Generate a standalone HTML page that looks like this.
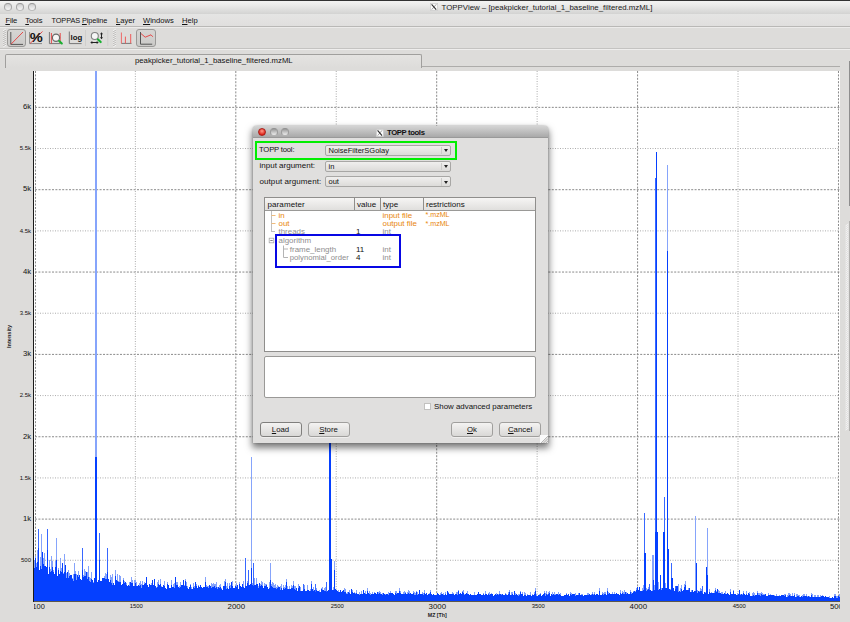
<!DOCTYPE html>
<html><head><meta charset="utf-8"><title>TOPPView</title>
<style>
html,body{margin:0;padding:0;}
body{width:850px;height:622px;overflow:hidden;position:relative;background:#dddcda;font-family:"Liberation Sans",sans-serif;color:#111;font-size:8px;}
div,span{box-sizing:border-box;}
.abs{position:absolute;}
#titlebar{position:absolute;left:0;top:0;width:850px;height:14px;background:linear-gradient(#f3f3f2,#ececeb 30%,#d3d3d2);border-top:1px solid #333;}
.tl{position:absolute;width:8px;height:8px;border-radius:50%;border:1px solid #a4a4a4;border-top-color:#989898;border-bottom-color:#bcbcbc;background:linear-gradient(#cfcfcf,#f6f6f6);}
#wtitle{position:absolute;left:441.6px;top:1.6px;font-size:7.85px;white-space:nowrap;color:#222;}
#menubar{position:absolute;left:0;top:14px;width:850px;height:12px;background:linear-gradient(#e5e5e4,#e0dfde);}
#menubar span{position:absolute;top:1.6px;font-size:7.6px;white-space:nowrap;color:#111;}
u{text-decoration:underline;text-underline-offset:1px;text-decoration-thickness:0.6px;}
.hline{position:absolute;left:0;width:850px;height:1px;}
#plot{position:absolute;left:33px;top:71px;width:807px;height:531px;background:#fff;}
.yl{position:absolute;left:0;width:31px;text-align:right;color:#111;line-height:12px;height:12px;}
.xl{position:absolute;top:601px;text-align:center;color:#111;line-height:11px;height:11px;white-space:nowrap;}
/* dialog */
#dlg{position:absolute;left:253px;top:126px;width:294.5px;height:317px;background:#e0dfde;border-radius:4px 4px 0 0;box-shadow:0 4px 7px 0.5px rgba(0,0,0,0.52),0 0 2px rgba(0,0,0,0.32);}
#dtitle{position:absolute;left:0;top:0;width:294.5px;height:12px;border-radius:4px 4px 0 0;background:linear-gradient(#d4d4d4,#a9a9a9);border-bottom:1px solid #999;}
.combo{position:absolute;left:72px;width:126px;height:11.2px;border:1px solid #a8a7a5;border-radius:2px;background:linear-gradient(#f0efee,#dcdbd9);font-size:7.5px;line-height:9.4px;padding-left:2.5px;white-space:nowrap;}
.combo i{position:absolute;right:8px;top:1px;width:1px;height:7.5px;background:#cccbc9;}
.combo b{position:absolute;right:2px;top:3.6px;width:0;height:0;border-left:2.5px solid transparent;border-right:2.5px solid transparent;border-top:3px solid #222;}
.lab{position:absolute;left:6px;font-size:8px;white-space:nowrap;line-height:10px;}
.btn{position:absolute;top:296.3px;width:42px;height:14.3px;border:1px solid #a09f9d;box-shadow:0 1px 0 #efeeed;border-radius:3px;background:linear-gradient(#f4f3f2,#d9d8d6);font-size:7.8px;text-align:center;line-height:13.6px;}
.row{position:absolute;font-size:7.95px;line-height:9px;white-space:nowrap;}
</style></head><body>

<!-- title bar -->
<div id="titlebar">
 <div class="tl" style="left:4.1px;top:1.7px"></div><div class="tl" style="left:16px;top:1.7px"></div><div class="tl" style="left:28.1px;top:1.7px"></div>
 <svg class="abs" style="left:430px;top:2.4px" width="8" height="8" viewBox="0 0 8 8"><rect x="0.3" y="0.3" width="7.4" height="7.2" fill="#fafafa" stroke="#c4c4c4" stroke-width="0.6"/><path d="M1.6,1.3 L6.2,6.6" stroke="#2a2a2a" stroke-width="1.05"/><path d="M6.3,1.3 L1.7,6.6" stroke="#444" stroke-width="0.5"/></svg>
 <div id="wtitle">TOPPView – [peakpicker_tutorial_1_baseline_filtered.mzML]</div>
</div>
<div id="menubar">
 <span style="left:5.4px;letter-spacing:-0.15px"><u>F</u>ile</span><span style="left:25.3px;letter-spacing:-0.15px"><u>T</u>ools</span><span style="left:51.5px;font-size:7.35px;top:1.8px;letter-spacing:-0.1px">TOPPAS <u>P</u>ipeline</span><span style="left:116px"><u>L</u>ayer</span><span style="left:143px"><u>W</u>indows</span><span style="left:182px"><u>H</u>elp</span>
</div>
<div class="hline" style="top:26px;background:#b9b8b6"></div>
<div class="hline" style="top:27px;background:#ecebea"></div>
<!-- toolbar -->
<div id="toolbar" class="abs" style="left:0;top:28px;width:850px;height:20px;">
 <div class="abs" style="left:7px;top:1px;width:19px;height:18px;border:1px solid #9a9997;border-radius:3px;background:linear-gradient(#d6d5d3,#cbcac8)"></div>
 <div class="abs" style="left:136px;top:1px;width:20px;height:18px;border:1px solid #9a9997;border-radius:3px;background:linear-gradient(#d6d5d3,#cbcac8)"></div>
 <svg class="abs" style="left:0;top:0" width="170" height="20" viewBox="0 28 170 20">
  <g fill="none" stroke-width="1">
   <!-- handles -->
   <path d="M3,31 l3,-2 M3,33 l3,-2 M3,35 l3,-2 M3,37 l3,-2 M3,39 l3,-2 M3,41 l3,-2 M3,43 l3,-2 M3,45 l3,-2 M3,47 l3,-2" stroke="#f8f8f8" stroke-width="1"/>
   <path d="M3,32 l3,-2 M3,34 l3,-2 M3,36 l3,-2 M3,38 l3,-2 M3,40 l3,-2 M3,42 l3,-2 M3,44 l3,-2 M3,46 l3,-2" stroke="#b9b8b6" stroke-width="0.9"/>
   <path d="M113,31 l3,-2 M113,33 l3,-2 M113,35 l3,-2 M113,37 l3,-2 M113,39 l3,-2 M113,41 l3,-2 M113,43 l3,-2 M113,45 l3,-2 M113,47 l3,-2" stroke="#f8f8f8" stroke-width="1"/>
   <path d="M113,32 l3,-2 M113,34 l3,-2 M113,36 l3,-2 M113,38 l3,-2 M113,40 l3,-2 M113,42 l3,-2 M113,44 l3,-2 M113,46 l3,-2" stroke="#b9b8b6" stroke-width="0.9"/>
   <!-- icon 1 linear -->
   <path d="M10.8,32 V44.4 H23" stroke="#555"/><path d="M11,44.2 L23,32" stroke="#e83a3a" stroke-width="0.9"/>
   <!-- icon 2 percent -->
   <path d="M29.6,32 V43.6 H42" stroke="#8a8a8a"/><path d="M30,43.5 L42.5,31.5" stroke="#e83a3a" stroke-width="0.9"/>
   <!-- icon 3 zoom -->
   <path d="M49.4,32 V43.6 H60.5" stroke="#777"/><path d="M51.4,33 V43.5 M60.2,33 V43.5" stroke="#e83a3a" stroke-width="0.9"/>
   <circle cx="56" cy="37.8" r="3.6" stroke="#6a6a6a" stroke-width="1.2" fill="#f6f6f6"/><path d="M59.2,41 L61.8,43.5" stroke="#18b030" stroke-width="2.1" stroke-linecap="round"/>
   <!-- icon 4 log -->
   <path d="M69.3,31.5 V43.6 H81.6" stroke="#777"/>
   <!-- icon 5 -->
   <circle cx="94.8" cy="36" r="3.5" stroke="#808080" stroke-width="1.1" fill="#f6f6f6"/><path d="M98,39.4 L100.7,42.1" stroke="#18b030" stroke-width="2.1" stroke-linecap="round"/>
   <path d="M101.5,33 V38.5" stroke="#222"/><path d="M100,34.3 L101.5,32.3 L103,34.3 Z M100,37.2 L101.5,39.2 L103,37.2 Z" fill="#222" stroke="none"/>
   <path d="M91.5,42.5 H97.5" stroke="#222"/><path d="M92.3,41 L90.3,42.5 L92.3,44 Z M96.7,41 L98.7,42.5 L96.7,44 Z" fill="#222" stroke="none"/>
   <!-- separators -->
   <path d="M85.5,30 V46" stroke="#cfcecc"/><path d="M107.8,30 V46" stroke="#cfcecc"/>
   <!-- icon 6 peaks -->
   <path d="M121.3,43.4 H131.5" stroke="#777"/><path d="M121.4,32.5 V43.4" stroke="#ee6a6a"/><path d="M125.4,36.6 V43.4 M130.7,34 V43.4" stroke="#ee5a5a"/>
   <!-- icon 7 line -->
   <path d="M140.5,32 V44.2 H152.2" stroke="#555"/><path d="M141,33.6 L145.2,37.2 L151,34.8 L152.8,36.8" stroke="#e83a3a" stroke-width="0.9"/>
  </g>
  <text x="29.8" y="41.7" font-family="Liberation Sans" font-weight="bold" font-size="12.5" fill="#111" textLength="13" lengthAdjust="spacingAndGlyphs">%</text>
  <text x="70.6" y="40" font-family="Liberation Sans" font-weight="bold" font-size="7.8" fill="#111">log</text>
 </svg>
</div>
<div class="hline" style="top:48px;background:#c4c3c1"></div>
<div class="hline" style="top:49px;background:#efeeed"></div>
<!-- tab -->
<div class="abs" style="left:5px;top:54px;width:417px;height:14px;border:1px solid #a09f9d;border-bottom:none;border-radius:2px 2px 0 0;background:linear-gradient(#e4e3e1,#dddcda);"></div>
<div class="abs" style="left:422px;top:66px;width:418px;height:1px;background:#adacaa"></div>
<div class="abs" style="left:135px;top:56px;font-size:7.75px;white-space:nowrap;color:#111">peakpicker_tutorial_1_baseline_filtered.mzML</div>

<!-- plot -->
<div id="plot"></div>
<svg class="abs" style="left:0;top:0" width="850" height="622" viewBox="0 0 850 622">
 <line x1="35" x2="840" y1="560.28" y2="560.28" stroke="#acacac" stroke-width="1" stroke-dasharray="1 1.5"/><line x1="35" x2="840" y1="519.10" y2="519.10" stroke="#8a8a8a" stroke-width="1" stroke-dasharray="2 1.4"/><line x1="35" x2="840" y1="477.93" y2="477.93" stroke="#acacac" stroke-width="1" stroke-dasharray="1 1.5"/><line x1="35" x2="840" y1="436.75" y2="436.75" stroke="#8a8a8a" stroke-width="1" stroke-dasharray="2 1.4"/><line x1="35" x2="840" y1="395.58" y2="395.58" stroke="#acacac" stroke-width="1" stroke-dasharray="1 1.5"/><line x1="35" x2="840" y1="354.40" y2="354.40" stroke="#8a8a8a" stroke-width="1" stroke-dasharray="2 1.4"/><line x1="35" x2="840" y1="313.23" y2="313.23" stroke="#acacac" stroke-width="1" stroke-dasharray="1 1.5"/><line x1="35" x2="840" y1="272.05" y2="272.05" stroke="#8a8a8a" stroke-width="1" stroke-dasharray="2 1.4"/><line x1="35" x2="840" y1="230.88" y2="230.88" stroke="#acacac" stroke-width="1" stroke-dasharray="1 1.5"/><line x1="35" x2="840" y1="189.70" y2="189.70" stroke="#8a8a8a" stroke-width="1" stroke-dasharray="2 1.4"/><line x1="35" x2="840" y1="148.53" y2="148.53" stroke="#acacac" stroke-width="1" stroke-dasharray="1 1.5"/><line x1="35" x2="840" y1="107.35" y2="107.35" stroke="#8a8a8a" stroke-width="1" stroke-dasharray="2 1.4"/><line y1="71" y2="601" x1="35.50" x2="35.50" stroke="#8a8a8a" stroke-width="1" stroke-dasharray="2 1.4"/><line y1="71" y2="601" x1="135.35" x2="135.35" stroke="#acacac" stroke-width="1" stroke-dasharray="1 1.5"/><line y1="71" y2="601" x1="235.80" x2="235.80" stroke="#8a8a8a" stroke-width="1" stroke-dasharray="2 1.4"/><line y1="71" y2="601" x1="336.24" x2="336.24" stroke="#acacac" stroke-width="1" stroke-dasharray="1 1.5"/><line y1="71" y2="601" x1="436.69" x2="436.69" stroke="#8a8a8a" stroke-width="1" stroke-dasharray="2 1.4"/><line y1="71" y2="601" x1="537.13" x2="537.13" stroke="#acacac" stroke-width="1" stroke-dasharray="1 1.5"/><line y1="71" y2="601" x1="637.58" x2="637.58" stroke="#8a8a8a" stroke-width="1" stroke-dasharray="2 1.4"/><line y1="71" y2="601" x1="738.02" x2="738.02" stroke="#acacac" stroke-width="1" stroke-dasharray="1 1.5"/><line y1="71" y2="601" x1="838.47" x2="838.47" stroke="#8a8a8a" stroke-width="1" stroke-dasharray="2 1.4"/>
</svg>
<svg class="abs" style="left:0;top:0" width="850" height="622" viewBox="0 0 850 622" shape-rendering="crispEdges">
 <path d="M34,601.0V560.0 h1V556.4 h1V563.2 h1V549.5 h1V564.2 h1V570.2 h1V556.8 h1V558.2 h1V565.7 h1V558.3 h1V556.4 h1V566.0 h1V567.0 h1V565.8 h1V573.7 h1V560.2 h1V568.8 h1V565.7 h1V561.2 h1V569.8 h1V573.7 h1V560.7 h1V570.1 h1V576.0 h1V567.7 h1V573.7 h1V561.7 h1V568.1 h1V562.7 h1V572.5 h1V575.8 h1V565.4 h1V572.5 h1V571.9 h1V570.4 h1V573.3 h1V574.5 h1V574.7 h1V577.9 h1V574.2 h1V574.2 h1V571.4 h1V573.9 h1V575.1 h1V570.9 h1V575.4 h1V578.6 h1V579.7 h1V579.5 h1V575.3 h1V569.2 h1V571.0 h1V571.5 h1V571.9 h1V574.2 h1V577.3 h1V577.8 h1V571.7 h1V579.9 h1V582.1 h1V578.1 h1V574.1 h1V575.0 h1V581.9 h1V580.4 h1V577.9 h1V580.6 h1V581.0 h1V578.1 h1V578.2 h1V576.4 h1V573.4 h1V573.7 h1V580.3 h1V578.6 h1V582.1 h1V575.3 h1V577.0 h1V583.6 h1V582.9 h1V584.6 h1V570.4 h1V579.6 h1V573.8 h1V580.8 h1V574.8 h1V575.7 h1V585.3 h1V583.9 h1V577.9 h1V580.5 h1V581.9 h1V582.7 h1V586.1 h1V585.3 h1V582.0 h1V582.1 h1V577.3 h1V580.1 h1V586.0 h1V579.9 h1V580.2 h1V582.1 h1V585.9 h1V584.6 h1V582.8 h1V581.4 h1V584.4 h1V581.0 h1V585.1 h1V581.5 h1V583.0 h1V577.2 h1V584.8 h1V587.2 h1V583.9 h1V585.2 h1V583.0 h1V579.6 h1V585.1 h1V579.2 h1V585.8 h1V586.5 h1V582.3 h1V580.4 h1V585.2 h1V579.4 h1V585.7 h1V587.2 h1V585.4 h1V581.0 h1V587.7 h1V588.6 h1V582.3 h1V584.5 h1V588.1 h1V588.2 h1V579.6 h1V586.7 h1V584.3 h1V583.0 h1V577.3 h1V582.2 h1V581.7 h1V587.2 h1V585.6 h1V581.5 h1V585.4 h1V585.3 h1V580.2 h1V584.9 h1V579.0 h1V582.2 h1V586.4 h1V588.8 h1V587.4 h1V583.5 h1V587.1 h1V588.5 h1V583.1 h1V585.8 h1V581.5 h1V584.1 h1V588.1 h1V585.2 h1V586.9 h1V584.6 h1V586.5 h1V587.8 h1V587.1 h1V587.2 h1V576.8 h1V585.1 h1V586.0 h1V585.8 h1V585.2 h1V586.0 h1V582.7 h1V583.8 h1V583.2 h1V583.6 h1V583.6 h1V581.6 h1V586.6 h1V586.8 h1V585.0 h1V584.4 h1V587.8 h1V589.6 h1V586.3 h1V581.0 h1V579.0 h1V586.3 h1V583.2 h1V589.0 h1V583.2 h1V585.4 h1V582.3 h1V580.6 h1V588.1 h1V587.6 h1V586.3 h1V582.8 h1V584.6 h1V588.5 h1V581.8 h1V586.3 h1V587.4 h1V584.2 h1V581.4 h1V587.5 h1V586.3 h1V586.1 h1V581.3 h1V582.8 h1V585.3 h1V583.6 h1V582.5 h1V582.8 h1V586.0 h1V578.1 h1V585.0 h1V580.9 h1V583.7 h1V585.6 h1V583.3 h1V584.0 h1V580.5 h1V583.7 h1V587.5 h1V583.0 h1V583.7 h1V583.9 h1V587.3 h1V588.8 h1V582.2 h1V585.3 h1V584.1 h1V581.8 h1V583.3 h1V584.8 h1V584.0 h1V586.6 h1V585.2 h1V585.7 h1V586.8 h1V585.5 h1V583.9 h1V589.7 h1V584.9 h1V586.7 h1V584.8 h1V578.6 h1V586.1 h1V588.8 h1V585.9 h1V589.3 h1V585.4 h1V585.6 h1V581.4 h1V585.5 h1V585.7 h1V587.9 h1V590.7 h1V584.2 h1V585.9 h1V587.0 h1V591.1 h1V590.9 h1V585.0 h1V585.4 h1V591.3 h1V590.5 h1V585.1 h1V589.6 h1V590.9 h1V588.9 h1V580.7 h1V588.6 h1V587.4 h1V590.4 h1V591.5 h1V587.8 h1V591.2 h1V591.3 h1V590.0 h1V591.7 h1V588.4 h1V586.5 h1V590.4 h1V588.1 h1V586.7 h1V591.8 h1V591.3 h1V590.1 h1V590.0 h1V588.7 h1V591.7 h1V590.1 h1V587.3 h1V589.1 h1V589.1 h1V590.3 h1V591.1 h1V589.6 h1V591.7 h1V590.3 h1V591.8 h1V591.2 h1V590.4 h1V588.3 h1V589.2 h1V592.5 h1V592.3 h1V591.5 h1V590.2 h1V593.8 h1V588.5 h1V590.4 h1V592.7 h1V591.5 h1V592.6 h1V589.9 h1V593.8 h1V593.5 h1V591.7 h1V593.9 h1V591.2 h1V593.6 h1V590.2 h1V592.9 h1V590.6 h1V594.1 h1V588.1 h1V593.2 h1V590.8 h1V593.1 h1V594.2 h1V591.8 h1V593.6 h1V592.0 h1V592.9 h1V594.4 h1V591.6 h1V591.6 h1V591.4 h1V592.3 h1V594.4 h1V592.7 h1V592.7 h1V593.9 h1V593.6 h1V594.0 h1V593.8 h1V591.8 h1V592.9 h1V590.6 h1V593.0 h1V593.1 h1V594.0 h1V594.8 h1V591.4 h1V591.4 h1V593.0 h1V593.3 h1V587.6 h1V590.6 h1V593.9 h1V593.7 h1V591.5 h1V590.9 h1V592.2 h1V594.2 h1V591.6 h1V590.2 h1V591.4 h1V593.3 h1V593.9 h1V594.3 h1V591.1 h1V591.9 h1V592.6 h1V590.7 h1V592.0 h1V593.7 h1V589.8 h1V593.5 h1V593.8 h1V592.4 h1V593.3 h1V590.2 h1V593.9 h1V593.3 h1V594.8 h1V593.6 h1V592.7 h1V590.3 h1V594.2 h1V595.2 h1V594.1 h1V594.5 h1V595.1 h1V595.2 h1V593.3 h1V594.2 h1V595.2 h1V592.5 h1V592.2 h1V594.4 h1V592.6 h1V594.8 h1V592.3 h1V594.7 h1V590.8 h1V591.7 h1V593.5 h1V593.7 h1V594.1 h1V591.6 h1V593.0 h1V595.3 h1V594.0 h1V592.1 h1V592.1 h1V589.9 h1V593.8 h1V593.1 h1V593.5 h1V591.0 h1V590.2 h1V594.2 h1V594.0 h1V592.6 h1V591.4 h1V594.0 h1V595.0 h1V593.5 h1V595.3 h1V595.2 h1V595.4 h1V591.9 h1V594.8 h1V594.7 h1V593.6 h1V591.7 h1V593.9 h1V593.6 h1V594.9 h1V594.8 h1V592.8 h1V595.1 h1V591.2 h1V594.0 h1V595.1 h1V593.1 h1V591.9 h1V593.8 h1V592.7 h1V594.2 h1V595.5 h1V595.2 h1V593.9 h1V593.1 h1V594.3 h1V593.8 h1V591.4 h1V594.2 h1V593.9 h1V593.8 h1V594.6 h1V594.9 h1V593.0 h1V594.2 h1V594.6 h1V591.6 h1V589.5 h1V594.5 h1V591.9 h1V592.2 h1V595.0 h1V591.1 h1V593.2 h1V594.3 h1V595.1 h1V594.2 h1V593.5 h1V590.7 h1V593.9 h1V592.1 h1V595.5 h1V591.8 h1V593.3 h1V595.6 h1V593.6 h1V595.4 h1V595.1 h1V592.1 h1V595.6 h1V593.8 h1V595.3 h1V592.2 h1V588.2 h1V594.4 h1V595.7 h1V595.4 h1V594.0 h1V593.1 h1V595.6 h1V595.2 h1V594.4 h1V590.6 h1V592.9 h1V591.2 h1V593.5 h1V592.4 h1V590.7 h1V595.5 h1V594.1 h1V592.2 h1V594.0 h1V591.8 h1V593.8 h1V593.9 h1V593.6 h1V592.0 h1V594.0 h1V593.0 h1V595.5 h1V595.5 h1V595.5 h1V595.1 h1V594.8 h1V592.6 h1V595.0 h1V594.1 h1V595.7 h1V591.7 h1V593.2 h1V594.4 h1V594.3 h1V594.3 h1V593.3 h1V595.3 h1V594.6 h1V593.4 h1V592.5 h1V594.8 h1V593.5 h1V593.8 h1V595.7 h1V594.7 h1V595.4 h1V594.8 h1V593.2 h1V593.4 h1V594.2 h1V594.9 h1V594.1 h1V592.4 h1V593.6 h1V592.3 h1V595.2 h1V594.2 h1V594.4 h1V594.8 h1V588.0 h1V594.5 h1V594.5 h1V591.9 h1V592.8 h1V591.7 h1V592.4 h1V594.9 h1V588.0 h1V591.8 h1V593.3 h1V594.3 h1V594.2 h1V592.4 h1V594.0 h1V591.9 h1V594.3 h1V593.3 h1V594.2 h1V594.4 h1V594.7 h1V590.1 h1V593.5 h1V591.3 h1V592.4 h1V590.1 h1V591.7 h1V592.2 h1V592.6 h1V593.9 h1V593.5 h1V590.2 h1V592.2 h1V593.3 h1V590.9 h1V591.3 h1V590.9 h1V588.0 h1V587.2 h1V589.8 h1V587.1 h1V591.4 h1V591.3 h1V588.1 h1V585.4 h1V588.5 h1V590.4 h1V587.5 h1V588.7 h1V586.9 h1V586.9 h1V590.2 h1V591.0 h1V590.8 h1V584.6 h1V585.2 h1V589.4 h1V586.1 h1V585.6 h1V587.3 h1V589.0 h1V589.6 h1V588.1 h1V587.8 h1V587.4 h1V586.3 h1V583.4 h1V588.0 h1V586.7 h1V585.0 h1V588.6 h1V588.5 h1V588.0 h1V588.2 h1V588.2 h1V590.9 h1V585.6 h1V585.7 h1V586.0 h1V587.8 h1V591.2 h1V588.0 h1V585.0 h1V590.8 h1V589.9 h1V584.2 h1V581.3 h1V590.0 h1V589.6 h1V588.4 h1V588.2 h1V592.1 h1V589.5 h1V590.3 h1V592.0 h1V590.9 h1V591.4 h1V587.6 h1V589.9 h1V590.5 h1V591.4 h1V587.6 h1V588.5 h1V592.5 h1V593.7 h1V592.1 h1V592.1 h1V590.4 h1V592.4 h1V593.6 h1V589.0 h1V593.4 h1V592.2 h1V592.9 h1V592.6 h1V591.4 h1V587.9 h1V590.5 h1V589.0 h1V590.0 h1V591.3 h1V593.1 h1V591.9 h1V592.1 h1V593.8 h1V592.9 h1V590.9 h1V593.6 h1V592.9 h1V594.4 h1V595.0 h1V589.3 h1V594.3 h1V593.7 h1V589.6 h1V594.2 h1V594.1 h1V595.1 h1V593.2 h1V593.7 h1V590.1 h1V593.9 h1V593.6 h1V593.8 h1V591.2 h1V594.3 h1V594.5 h1V591.4 h1V595.1 h1V592.8 h1V591.8 h1V595.7 h1V595.7 h1V592.8 h1V592.3 h1V593.3 h1V595.4 h1V595.1 h1V591.3 h1V593.3 h1V592.9 h1V593.3 h1V591.5 h1V592.9 h1V594.3 h1V593.5 h1V594.2 h1V595.9 h1V596.0 h1V592.8 h1V595.2 h1V593.9 h1V595.2 h1V595.4 h1V595.3 h1V594.9 h1V596.0 h1V594.4 h1V596.0 h1V595.9 h1V594.6 h1V596.2 h1V595.2 h1V595.3 h1V595.2 h1V594.3 h1V594.3 h1V596.5 h1V594.5 h1V593.3 h1V593.1 h1V594.2 h1V596.1 h1V593.3 h1V596.0 h1V593.4 h1V596.5 h1V594.1 h1V594.2 h1V594.7 h1V594.6 h1V596.5 h1V596.3 h1V594.5 h1V593.9 h1V594.0 h1V595.8 h1V593.8 h1V595.8 h1V595.9 h1V595.8 h1V597.0 h1V592.9 h1V594.4 h1V596.7 h1V595.2 h1V595.0 h1V596.8 h1V595.2 h1V594.7 h1V596.6 h1V594.9 h1V596.3 h1V594.7 h1V596.3 h1V596.7 h1V596.4 h1V597.1 h1V597.3 h1V596.9 h1V595.6 h1V597.5 h1V597.5 h1V596.7 h1V597.6 h1V594.1 h1V593.5 h1V596.0 h1V595.5 h1V596.4 h1V594.4 h1V601.0 Z" fill="#86a4fb"/>
 <rect x="38" y="529" width="1" height="72.0" fill="#3868ff"/><rect x="38" y="548" width="1" height="53.0" fill="#0540ff"/><rect x="41" y="534" width="1" height="67.0" fill="#86a4fb"/><rect x="42" y="552" width="1" height="49.0" fill="#0540ff"/><rect x="47" y="529" width="1" height="72.0" fill="#3868ff"/><rect x="47" y="550" width="1" height="51.0" fill="#0540ff"/><rect x="44" y="553" width="1" height="48.0" fill="#86a4fb"/><rect x="51" y="556" width="1" height="45.0" fill="#86a4fb"/><rect x="56" y="538" width="1" height="63.0" fill="#86a4fb"/><rect x="56" y="560" width="1" height="41.0" fill="#0540ff"/><rect x="60" y="558" width="1" height="43.0" fill="#86a4fb"/><rect x="64" y="554" width="1" height="47.0" fill="#86a4fb"/><rect x="64" y="572" width="1" height="29.0" fill="#0540ff"/><rect x="74" y="563" width="1" height="38.0" fill="#86a4fb"/><rect x="82" y="548" width="1" height="53.0" fill="#3868ff"/><rect x="82" y="570" width="1" height="31.0" fill="#0540ff"/><rect x="88" y="566" width="1" height="35.0" fill="#86a4fb"/><rect x="99" y="533" width="1" height="68.0" fill="#3868ff"/><rect x="99" y="560" width="1" height="41.0" fill="#0540ff"/><rect x="107" y="548" width="1" height="53.0" fill="#3868ff"/><rect x="107" y="572" width="1" height="29.0" fill="#0540ff"/><rect x="112" y="574" width="1" height="27.0" fill="#86a4fb"/><rect x="95" y="71" width="2" height="530.0" fill="#86a4fb"/><rect x="95" y="457" width="2" height="144.0" fill="#0540ff"/><rect x="245" y="558" width="1" height="43.0" fill="#3868ff"/><rect x="248" y="570" width="1" height="31.0" fill="#3868ff"/><rect x="251" y="457" width="1" height="144.0" fill="#86a4fb"/><rect x="251" y="568" width="1" height="33.0" fill="#0540ff"/><rect x="253" y="563" width="1" height="38.0" fill="#3868ff"/><rect x="256" y="578" width="1" height="23.0" fill="#86a4fb"/><rect x="270" y="563" width="1" height="38.0" fill="#86a4fb"/><rect x="270" y="580" width="1" height="21.0" fill="#0540ff"/><rect x="262" y="582" width="1" height="19.0" fill="#86a4fb"/><rect x="329" y="300" width="2" height="301.0" fill="#0540ff"/><rect x="331" y="559" width="1" height="42.0" fill="#0540ff"/><rect x="334" y="561" width="1" height="40.0" fill="#86a4fb"/><rect x="334" y="570" width="1" height="31.0" fill="#0540ff"/><rect x="326" y="582" width="1" height="19.0" fill="#3868ff"/><rect x="303" y="584" width="1" height="17.0" fill="#3868ff"/><rect x="315" y="584" width="1" height="17.0" fill="#3868ff"/><rect x="644" y="513" width="1" height="88.0" fill="#3868ff"/><rect x="644" y="553" width="2" height="48.0" fill="#0540ff"/><rect x="652" y="555" width="2" height="46.0" fill="#86a4fb"/><rect x="653" y="580" width="1" height="21.0" fill="#0540ff"/><rect x="655" y="178" width="1" height="423.0" fill="#3868ff"/><rect x="656" y="152" width="1" height="449.0" fill="#0540ff"/><rect x="655" y="532" width="3" height="69.0" fill="#0540ff"/><rect x="660" y="575" width="1" height="26.0" fill="#0540ff"/><rect x="664" y="497" width="1" height="104.0" fill="#3868ff"/><rect x="663" y="532" width="2" height="69.0" fill="#0540ff"/><rect x="667" y="165" width="1" height="436.0" fill="#86a4fb"/><rect x="667" y="251" width="1" height="350.0" fill="#0540ff"/><rect x="667" y="549" width="2" height="52.0" fill="#0540ff"/><rect x="671" y="563" width="1" height="38.0" fill="#3868ff"/><rect x="671" y="578" width="2" height="23.0" fill="#0540ff"/><rect x="695" y="516" width="1" height="85.0" fill="#86a4fb"/><rect x="696" y="563" width="1" height="38.0" fill="#0540ff"/><rect x="707" y="528" width="1" height="73.0" fill="#86a4fb"/><rect x="706" y="567" width="1" height="34.0" fill="#0540ff"/><rect x="707" y="575" width="1" height="26.0" fill="#0540ff"/><rect x="702" y="586" width="1" height="15.0" fill="#3868ff"/><rect x="649" y="584" width="1" height="17.0" fill="#3868ff"/><rect x="658" y="582" width="1" height="19.0" fill="#86a4fb"/><rect x="675" y="586" width="1" height="15.0" fill="#3868ff"/><rect x="678" y="584" width="1" height="17.0" fill="#86a4fb"/>
 <path d="M34,601.0V567.5 h1V557.7 h1V566.8 h1V561.5 h1V568.8 h1V570.2 h1V565.5 h1V569.3 h1V565.7 h1V564.2 h1V565.7 h1V566.0 h1V567.0 h1V565.8 h1V573.7 h1V566.7 h1V572.3 h1V571.4 h1V567.0 h1V572.2 h1V573.7 h1V567.3 h1V570.1 h1V576.0 h1V569.7 h1V573.7 h1V570.9 h1V572.4 h1V562.7 h1V574.4 h1V575.8 h1V565.4 h1V578.1 h1V571.9 h1V577.9 h1V576.2 h1V574.5 h1V574.7 h1V579.1 h1V580.7 h1V574.2 h1V574.1 h1V579.7 h1V575.1 h1V577.0 h1V575.4 h1V578.6 h1V579.7 h1V579.5 h1V577.4 h1V576.3 h1V576.0 h1V571.5 h1V579.2 h1V577.4 h1V581.3 h1V582.1 h1V579.2 h1V579.9 h1V583.1 h1V578.1 h1V578.7 h1V579.9 h1V581.9 h1V580.4 h1V577.9 h1V580.6 h1V581.0 h1V578.1 h1V578.2 h1V578.3 h1V578.8 h1V579.4 h1V580.3 h1V578.6 h1V582.1 h1V579.6 h1V582.7 h1V584.7 h1V582.9 h1V584.6 h1V576.3 h1V579.6 h1V580.6 h1V582.1 h1V581.6 h1V582.0 h1V585.3 h1V583.9 h1V579.6 h1V583.3 h1V581.9 h1V585.2 h1V586.1 h1V585.3 h1V585.9 h1V582.1 h1V583.0 h1V583.0 h1V586.0 h1V585.6 h1V582.6 h1V585.6 h1V585.9 h1V584.6 h1V585.9 h1V585.1 h1V587.6 h1V585.1 h1V585.1 h1V584.2 h1V583.0 h1V577.2 h1V584.8 h1V587.2 h1V583.9 h1V585.2 h1V584.7 h1V579.6 h1V585.1 h1V579.2 h1V585.8 h1V587.9 h1V587.0 h1V583.8 h1V585.2 h1V584.2 h1V587.0 h1V587.2 h1V585.4 h1V586.4 h1V587.7 h1V588.6 h1V584.3 h1V584.5 h1V588.1 h1V588.2 h1V584.9 h1V586.7 h1V586.9 h1V587.6 h1V577.3 h1V585.1 h1V584.7 h1V587.2 h1V587.9 h1V587.0 h1V585.4 h1V585.3 h1V580.2 h1V586.1 h1V581.4 h1V586.2 h1V588.1 h1V588.8 h1V587.4 h1V585.3 h1V589.2 h1V588.5 h1V586.5 h1V588.1 h1V581.5 h1V586.2 h1V588.1 h1V586.3 h1V586.9 h1V584.6 h1V586.5 h1V587.8 h1V587.1 h1V587.2 h1V581.9 h1V587.3 h1V587.3 h1V587.7 h1V585.2 h1V586.0 h1V587.9 h1V587.0 h1V587.1 h1V586.1 h1V588.2 h1V586.9 h1V588.6 h1V586.8 h1V587.9 h1V587.2 h1V589.0 h1V589.6 h1V586.3 h1V586.1 h1V581.7 h1V588.5 h1V588.4 h1V589.0 h1V586.4 h1V588.1 h1V582.3 h1V585.8 h1V588.1 h1V587.6 h1V586.3 h1V587.4 h1V584.6 h1V588.5 h1V584.1 h1V586.3 h1V587.4 h1V584.2 h1V586.5 h1V587.5 h1V586.3 h1V586.1 h1V582.8 h1V585.0 h1V585.3 h1V583.6 h1V586.6 h1V585.2 h1V586.0 h1V584.5 h1V585.0 h1V584.4 h1V583.7 h1V587.6 h1V583.3 h1V586.3 h1V584.6 h1V585.5 h1V587.5 h1V585.7 h1V585.7 h1V585.4 h1V587.3 h1V588.8 h1V587.6 h1V588.2 h1V586.0 h1V586.8 h1V588.2 h1V588.2 h1V587.7 h1V588.8 h1V588.3 h1V587.2 h1V586.8 h1V590.3 h1V588.2 h1V589.7 h1V587.5 h1V588.8 h1V588.0 h1V582.0 h1V588.8 h1V588.8 h1V589.3 h1V589.3 h1V588.3 h1V588.3 h1V585.3 h1V588.5 h1V590.0 h1V587.9 h1V590.7 h1V588.2 h1V585.9 h1V591.0 h1V591.1 h1V590.9 h1V589.5 h1V589.4 h1V591.3 h1V590.5 h1V589.8 h1V589.6 h1V590.9 h1V590.6 h1V584.1 h1V588.6 h1V590.6 h1V590.4 h1V591.5 h1V590.1 h1V591.2 h1V591.3 h1V591.5 h1V591.7 h1V589.4 h1V589.8 h1V590.4 h1V591.1 h1V590.5 h1V591.8 h1V591.3 h1V590.1 h1V591.2 h1V588.7 h1V591.7 h1V590.1 h1V589.6 h1V589.1 h1V589.1 h1V590.3 h1V591.1 h1V591.5 h1V591.7 h1V590.3 h1V591.8 h1V591.2 h1V590.4 h1V591.5 h1V592.1 h1V593.6 h1V593.7 h1V591.5 h1V592.7 h1V593.8 h1V588.5 h1V591.5 h1V592.7 h1V592.7 h1V594.4 h1V592.7 h1V593.8 h1V593.5 h1V594.6 h1V593.9 h1V594.2 h1V593.6 h1V590.2 h1V592.9 h1V593.9 h1V594.1 h1V591.0 h1V593.2 h1V594.0 h1V594.6 h1V594.2 h1V593.9 h1V593.6 h1V593.4 h1V592.9 h1V594.4 h1V591.6 h1V594.3 h1V593.0 h1V594.1 h1V594.4 h1V594.7 h1V592.7 h1V593.9 h1V594.7 h1V594.0 h1V593.8 h1V594.6 h1V592.9 h1V593.3 h1V593.0 h1V593.1 h1V594.0 h1V594.8 h1V593.4 h1V594.0 h1V593.0 h1V593.3 h1V590.5 h1V593.0 h1V593.9 h1V593.7 h1V594.2 h1V594.2 h1V593.3 h1V594.2 h1V594.3 h1V593.1 h1V594.2 h1V593.3 h1V593.9 h1V594.3 h1V593.4 h1V594.8 h1V594.6 h1V592.2 h1V594.5 h1V593.7 h1V589.8 h1V593.5 h1V593.8 h1V593.8 h1V594.7 h1V593.3 h1V593.9 h1V593.3 h1V594.8 h1V593.6 h1V594.0 h1V592.4 h1V594.2 h1V595.2 h1V594.1 h1V594.5 h1V595.1 h1V595.2 h1V593.3 h1V594.2 h1V595.2 h1V594.6 h1V594.2 h1V594.4 h1V594.7 h1V594.8 h1V594.0 h1V594.7 h1V590.8 h1V593.1 h1V593.5 h1V593.7 h1V594.1 h1V594.1 h1V594.4 h1V595.3 h1V594.0 h1V593.8 h1V594.5 h1V591.2 h1V593.8 h1V593.1 h1V593.5 h1V592.3 h1V593.3 h1V595.3 h1V594.0 h1V592.6 h1V593.7 h1V594.0 h1V595.0 h1V593.5 h1V595.3 h1V595.2 h1V595.4 h1V594.6 h1V594.8 h1V594.7 h1V593.6 h1V591.7 h1V593.9 h1V593.6 h1V594.9 h1V594.8 h1V593.8 h1V595.1 h1V594.0 h1V594.0 h1V595.1 h1V594.3 h1V594.5 h1V593.8 h1V594.3 h1V594.2 h1V595.5 h1V595.2 h1V593.9 h1V594.5 h1V594.3 h1V594.9 h1V593.7 h1V594.2 h1V595.0 h1V593.8 h1V594.6 h1V594.9 h1V594.1 h1V595.3 h1V594.6 h1V593.9 h1V591.7 h1V594.5 h1V594.9 h1V593.8 h1V595.0 h1V591.1 h1V594.5 h1V594.3 h1V595.1 h1V595.5 h1V594.8 h1V591.8 h1V593.9 h1V594.1 h1V595.5 h1V594.5 h1V594.8 h1V595.6 h1V595.4 h1V595.4 h1V595.1 h1V595.1 h1V595.6 h1V595.3 h1V595.3 h1V593.8 h1V591.2 h1V595.7 h1V595.7 h1V595.4 h1V595.3 h1V594.3 h1V595.6 h1V595.2 h1V594.4 h1V593.1 h1V595.7 h1V594.1 h1V594.9 h1V594.2 h1V592.8 h1V595.5 h1V594.1 h1V595.0 h1V594.0 h1V594.8 h1V595.3 h1V593.9 h1V593.6 h1V594.8 h1V594.0 h1V594.8 h1V595.5 h1V595.5 h1V595.5 h1V595.1 h1V594.8 h1V594.3 h1V595.0 h1V594.1 h1V595.7 h1V594.0 h1V595.1 h1V594.4 h1V594.3 h1V594.3 h1V595.7 h1V595.3 h1V594.6 h1V595.0 h1V592.5 h1V594.8 h1V594.8 h1V595.3 h1V595.7 h1V594.7 h1V595.4 h1V594.8 h1V595.2 h1V595.1 h1V594.2 h1V594.9 h1V595.3 h1V594.2 h1V595.0 h1V594.0 h1V595.2 h1V594.2 h1V594.4 h1V594.8 h1V590.6 h1V594.5 h1V594.5 h1V593.9 h1V594.7 h1V594.4 h1V593.8 h1V594.9 h1V590.9 h1V593.7 h1V593.3 h1V594.3 h1V594.2 h1V594.2 h1V594.0 h1V593.8 h1V594.3 h1V593.3 h1V594.2 h1V594.4 h1V594.7 h1V593.2 h1V593.5 h1V593.0 h1V593.8 h1V593.5 h1V591.7 h1V594.0 h1V592.6 h1V593.9 h1V593.5 h1V591.5 h1V593.5 h1V593.3 h1V591.9 h1V591.3 h1V592.2 h1V590.4 h1V587.2 h1V589.8 h1V587.1 h1V591.4 h1V591.3 h1V590.5 h1V589.5 h1V590.1 h1V590.4 h1V590.5 h1V590.2 h1V588.6 h1V590.4 h1V590.2 h1V591.0 h1V590.8 h1V588.4 h1V589.9 h1V589.4 h1V590.7 h1V589.0 h1V590.3 h1V589.0 h1V589.6 h1V589.8 h1V587.8 h1V590.4 h1V587.8 h1V588.1 h1V588.0 h1V590.4 h1V588.6 h1V588.6 h1V589.9 h1V588.0 h1V590.3 h1V588.2 h1V590.9 h1V589.1 h1V585.7 h1V586.0 h1V591.7 h1V591.2 h1V591.7 h1V589.4 h1V590.8 h1V589.9 h1V587.0 h1V584.7 h1V590.0 h1V589.6 h1V590.1 h1V588.2 h1V592.1 h1V591.5 h1V590.3 h1V592.0 h1V590.9 h1V591.4 h1V589.2 h1V593.1 h1V590.5 h1V592.4 h1V590.8 h1V590.9 h1V592.5 h1V593.7 h1V592.1 h1V593.2 h1V591.9 h1V592.4 h1V593.6 h1V592.3 h1V593.4 h1V593.3 h1V592.9 h1V592.6 h1V593.2 h1V590.0 h1V592.0 h1V589.0 h1V592.7 h1V593.4 h1V593.1 h1V594.3 h1V594.0 h1V593.8 h1V592.9 h1V593.5 h1V593.6 h1V592.9 h1V594.4 h1V595.0 h1V591.7 h1V594.3 h1V593.7 h1V590.8 h1V594.2 h1V594.1 h1V595.1 h1V595.2 h1V593.7 h1V590.1 h1V595.3 h1V593.6 h1V595.3 h1V592.9 h1V594.3 h1V594.5 h1V594.0 h1V595.1 h1V592.8 h1V594.1 h1V595.7 h1V595.7 h1V595.5 h1V594.9 h1V595.7 h1V595.4 h1V595.1 h1V593.2 h1V594.6 h1V594.8 h1V596.0 h1V594.2 h1V594.8 h1V595.3 h1V595.4 h1V594.2 h1V595.9 h1V596.0 h1V594.8 h1V595.2 h1V595.4 h1V595.2 h1V595.4 h1V595.3 h1V596.0 h1V596.0 h1V595.8 h1V596.0 h1V595.9 h1V596.2 h1V596.2 h1V595.2 h1V595.3 h1V595.2 h1V596.1 h1V595.4 h1V596.5 h1V596.5 h1V595.5 h1V595.4 h1V595.5 h1V596.1 h1V595.5 h1V596.0 h1V595.4 h1V596.5 h1V596.6 h1V596.2 h1V596.0 h1V596.8 h1V596.5 h1V596.3 h1V596.6 h1V596.0 h1V595.8 h1V595.8 h1V596.3 h1V596.9 h1V595.9 h1V597.0 h1V597.0 h1V595.3 h1V596.6 h1V596.7 h1V597.2 h1V596.8 h1V596.8 h1V596.5 h1V596.8 h1V596.6 h1V597.1 h1V596.3 h1V596.4 h1V596.3 h1V596.7 h1V596.4 h1V597.1 h1V597.3 h1V596.9 h1V597.6 h1V597.5 h1V597.5 h1V596.7 h1V597.6 h1V595.7 h1V595.7 h1V597.5 h1V597.5 h1V596.4 h1V596.6 h1V601.0 Z" fill="#0540ff"/>
 <rect x="33" y="71" width="1" height="531" fill="#1a1a1a"/>
 <rect x="34" y="601" width="806" height="1" fill="#5c574c"/>
</svg>
<div class="yl" style="top:554.0px;font-size:6.0px">500</div><div class="yl" style="top:512.8px;font-size:7.7px">1k</div><div class="yl" style="top:471.6px;font-size:6.0px">1.5k</div><div class="yl" style="top:430.5px;font-size:7.7px">2k</div><div class="yl" style="top:389.3px;font-size:6.0px">2.5k</div><div class="yl" style="top:348.1px;font-size:7.7px">3k</div><div class="yl" style="top:306.9px;font-size:6.0px">3.5k</div><div class="yl" style="top:265.8px;font-size:7.7px">4k</div><div class="yl" style="top:224.6px;font-size:6.0px">4.5k</div><div class="yl" style="top:183.4px;font-size:7.7px">5k</div><div class="yl" style="top:142.2px;font-size:6.0px">5.5k</div><div class="yl" style="top:101.1px;font-size:7.7px">6k</div>
<div class="xl" style="left:34px;width:11px;text-align:left;overflow:hidden;font-size:7.4px"><span style="margin-left:-1.6px">100</span></div><div class="xl" style="left:136.3px;width:40px;margin-left:-20px;font-size:5.9px">1500</div><div class="xl" style="left:236.3px;width:40px;margin-left:-20px;font-size:7.9px">2000</div><div class="xl" style="left:337.3px;width:40px;margin-left:-20px;font-size:5.9px">2500</div><div class="xl" style="left:437.3px;width:40px;margin-left:-20px;font-size:7.9px">3000</div><div class="xl" style="left:538.3px;width:40px;margin-left:-20px;font-size:5.9px">3500</div><div class="xl" style="left:638.3px;width:40px;margin-left:-20px;font-size:7.9px">4000</div><div class="xl" style="left:739.3px;width:40px;margin-left:-20px;font-size:5.9px">4500</div><div class="xl" style="left:830px;width:10px;text-align:left;overflow:hidden;font-size:7.7px">5000</div>
<div class="abs" style="left:6.2px;top:334px;width:10px;height:10px;"><div style="transform:rotate(-90deg);transform-origin:0 0;position:absolute;left:0;top:14px;font-size:5.6px;white-space:nowrap;font-weight:bold;color:#222">Intensity</div></div>
<div class="abs" style="left:417.3px;top:612px;width:40px;text-align:center;font-size:5.3px;font-weight:bold;color:#222;white-space:nowrap">MZ [Th]</div>
<!-- right edge -->
<div class="abs" style="left:849px;top:61px;width:1px;height:145px;background:#8e8e8e"></div>
<div class="abs" style="left:849px;top:221px;width:1px;height:210px;background:#b0afad"></div>
<svg class="abs" style="left:845px;top:222px" width="4" height="210"><path d="M0.5,4 l3,-2 M0.5,6 l3,-2 M0.5,8 l3,-2 M0.5,10 l3,-2 M0.5,12 l3,-2 M0.5,14 l3,-2 M0.5,16 l3,-2 M0.5,18 l3,-2 M0.5,20 l3,-2 M0.5,22 l3,-2 M0.5,24 l3,-2 M0.5,26 l3,-2 M0.5,28 l3,-2 M0.5,30 l3,-2 M0.5,32 l3,-2 M0.5,34 l3,-2 M0.5,36 l3,-2 M0.5,38 l3,-2 M0.5,40 l3,-2 M0.5,42 l3,-2 M0.5,44 l3,-2 M0.5,46 l3,-2 M0.5,48 l3,-2 M0.5,50 l3,-2 M0.5,52 l3,-2 M0.5,54 l3,-2 M0.5,56 l3,-2 M0.5,58 l3,-2 M0.5,60 l3,-2 M0.5,62 l3,-2 M0.5,64 l3,-2 M0.5,66 l3,-2 M0.5,68 l3,-2 M0.5,70 l3,-2 M0.5,72 l3,-2 M0.5,74 l3,-2 M0.5,76 l3,-2 M0.5,78 l3,-2 M0.5,80 l3,-2 M0.5,82 l3,-2 M0.5,84 l3,-2 M0.5,86 l3,-2 M0.5,88 l3,-2 M0.5,90 l3,-2 M0.5,92 l3,-2 M0.5,94 l3,-2 M0.5,96 l3,-2 M0.5,98 l3,-2 M0.5,100 l3,-2 M0.5,102 l3,-2 M0.5,104 l3,-2 M0.5,106 l3,-2 M0.5,108 l3,-2 M0.5,110 l3,-2 M0.5,112 l3,-2 M0.5,114 l3,-2 M0.5,116 l3,-2 M0.5,118 l3,-2 M0.5,120 l3,-2 M0.5,122 l3,-2 M0.5,124 l3,-2 M0.5,126 l3,-2 M0.5,128 l3,-2 M0.5,130 l3,-2 M0.5,132 l3,-2 M0.5,134 l3,-2 M0.5,136 l3,-2 M0.5,138 l3,-2 M0.5,140 l3,-2 M0.5,142 l3,-2 M0.5,144 l3,-2 M0.5,146 l3,-2 M0.5,148 l3,-2 M0.5,150 l3,-2 M0.5,152 l3,-2 M0.5,154 l3,-2 M0.5,156 l3,-2 M0.5,158 l3,-2 M0.5,160 l3,-2 M0.5,162 l3,-2 M0.5,164 l3,-2 M0.5,166 l3,-2 M0.5,168 l3,-2 M0.5,170 l3,-2 M0.5,172 l3,-2 M0.5,174 l3,-2 M0.5,176 l3,-2 M0.5,178 l3,-2 M0.5,180 l3,-2 M0.5,182 l3,-2 M0.5,184 l3,-2 M0.5,186 l3,-2 M0.5,188 l3,-2 M0.5,190 l3,-2 M0.5,192 l3,-2 M0.5,194 l3,-2 M0.5,196 l3,-2 M0.5,198 l3,-2 M0.5,200 l3,-2 M0.5,202 l3,-2 M0.5,204 l3,-2 M0.5,206 l3,-2 M0.5,208 l3,-2 " stroke="#f6f6f6" stroke-width="1" fill="none"/></svg>

<!-- dialog -->
<div id="dlg">
 <div id="dtitle">
  <div class="tl" style="left:5px;top:2px;width:8px;height:8px;background:radial-gradient(circle at 50% 35%,#ff9a8a,#e0251a 70%);border-color:#a8201a"></div>
  <div class="tl" style="left:17px;top:2px;width:8px;height:8px;background:linear-gradient(#9a9a9a,#ededed);border-color:#8f8f8f #9c9c9c #b4b4b4"></div>
  <div class="tl" style="left:28px;top:2px;width:8px;height:8px;background:linear-gradient(#9a9a9a,#ededed);border-color:#8f8f8f #9c9c9c #b4b4b4"></div>
  <svg class="abs" style="left:123px;top:2.5px" width="8" height="8" viewBox="0 0 8 8"><rect x="0.3" y="0.3" width="7.2" height="7.2" fill="#fafafa" stroke="#c4c4c4" stroke-width="0.6"/><path d="M1.6,1.3 L6.0,6.6" stroke="#2a2a2a" stroke-width="1.05"/><path d="M6.1,1.3 L1.7,6.6" stroke="#444" stroke-width="0.5"/></svg>
  <div class="abs" style="left:134px;top:1.6px;font-size:7.7px;font-weight:bold;letter-spacing:-0.36px;white-space:nowrap;color:#111">TOPP tools</div>
 </div>
 <!-- green box -->
 <div class="abs" style="left:2px;top:15px;width:202px;height:19px;border:2px solid #00ee00;"></div>
 <div class="lab" style="top:19.4px;font-size:7.7px;letter-spacing:-0.2px">TOPP tool:</div>
 <div class="lab" style="top:35.3px;left:6.5px">input argument:</div>
 <div class="lab" style="top:51px;left:6.5px;font-size:8px;letter-spacing:0.08px">output argument:</div>
 <div class="combo" style="top:18.6px">NoiseFilterSGolay<i></i><b></b></div>
 <div class="combo" style="top:34.6px">in<i></i><b></b></div>
 <div class="combo" style="top:50.3px">out<i></i><b></b></div>
 <!-- table -->
 <div class="abs" style="left:11px;top:71px;width:272px;height:155px;border:1px solid #8f8e8c;background:#fff"></div>
 <div class="abs" style="left:12px;top:72px;width:270px;height:12.5px;background:linear-gradient(#f6f5f4,#e0dfdd);border-bottom:1px solid #9a9997;"></div>
 <div class="abs" style="left:101px;top:72px;width:1px;height:12px;background:#8f8e8c"></div>
 <div class="abs" style="left:127px;top:72px;width:1px;height:12px;background:#8f8e8c"></div>
 <div class="abs" style="left:170px;top:72px;width:1px;height:12px;background:#8f8e8c"></div>
 <div class="row" style="left:14.5px;top:74px;font-size:8px;letter-spacing:0.1px;color:#111">parameter</div>
 <div class="row" style="left:104px;top:74px;font-size:8px;color:#111">value</div>
 <div class="row" style="left:130px;top:74px;font-size:8px;color:#111">type</div>
 <div class="row" style="left:173px;top:74px;font-size:8px;color:#111">restrictions</div>
 <!-- rows -->
 <div class="row" style="left:25.5px;top:84.5px;color:#e8860c">in</div>
 <div class="row" style="left:25.5px;top:93px;color:#e8860c">out</div>
 <div class="row" style="left:25.5px;top:101.3px;color:#8e8e8e">threads</div>
 <div class="row" style="left:103px;top:101.3px;color:#111">1</div>
 <div class="row" style="left:129.5px;top:84.5px;color:#e8860c">input file</div>
 <div class="row" style="left:129.5px;top:93px;color:#e8860c">output file</div>
 <div class="row" style="left:129.5px;top:101.3px;color:#8e8e8e">int</div>
 <div class="row" style="left:172.5px;top:85.4px;color:#e8860c;font-size:7.1px">*.mzML</div>
 <div class="row" style="left:172.5px;top:93.5px;color:#e8860c;font-size:7.1px">*.mzML</div>
 <!-- blue box -->
 <div class="abs" style="left:22px;top:108px;width:126.3px;height:33.5px;border:2px solid #0808e4;background:#fff"></div>
 <div class="row" style="left:25.5px;top:110px;color:#8e8e8e">algorithm</div>
 <div class="row" style="left:36.8px;top:118.5px;color:#8e8e8e">frame_length</div>
 <div class="row" style="left:36.8px;top:126.9px;color:#8e8e8e;font-size:7.7px">polynomial_order</div>
 <div class="row" style="left:103px;top:118.5px;color:#111">11</div>
 <div class="row" style="left:103px;top:126.9px;color:#111">4</div>
 <div class="row" style="left:129.5px;top:118.5px;color:#8e8e8e">int</div>
 <div class="row" style="left:129.5px;top:126.9px;color:#8e8e8e">int</div>
 <svg class="abs" style="left:0;top:0" width="295" height="317"><g fill="none" stroke="#c0c0c0" stroke-width="1">
  <path d="M18.5,85 V106 M18.5,105.5 H22"/>
  <path d="M18.5,89.5 H22.5 M18.5,97.5 H22.5" stroke="#f0bc7c"/>
  <rect x="16.2" y="112.2" width="4.6" height="4.6" fill="#fff" stroke="#a8a8a8" stroke-width="0.8"/><path d="M17.3,114.5 H19.7" stroke="#666" stroke-width="0.8"/>
  <path d="M30.5,119.5 V131.5 H35 M30.5,123 H35" stroke="#b4b4b4"/>
 </g></svg>
 <!-- text box -->
 <div class="abs" style="left:11px;top:229.5px;width:272px;height:42.5px;border:1px solid #9a9997;border-radius:2px;background:#fff"></div>
 <!-- checkbox -->
 <div class="abs" style="left:171px;top:277px;width:7px;height:7px;border:1px solid #c2c1bf;background:#fff"></div>
 <div class="abs" style="left:181px;top:276px;font-size:7.9px;white-space:nowrap;color:#111">Show advanced parameters</div>
 <!-- buttons -->
 <div class="btn" style="left:6.5px;border-color:#807f7d"><u>L</u>oad</div>
 <div class="btn" style="left:54.5px"><u>S</u>tore</div>
 <div class="btn" style="left:198px"><u>O</u>k</div>
 <div class="btn" style="left:246.1px"><u>C</u>ancel</div>
 <svg class="abs" style="left:286.5px;top:309px" width="8" height="8" viewBox="0 0 8 8"><path d="M0,0 H8 V8 H0 Z" fill="#fafafa"/><path d="M8,1 V8 H1 Z" fill="#e4e3e2"/><path d="M1,8 L8,1 M3.5,8 L8,3.5 M6,8 L8,6" stroke="#a8a8a8" stroke-width="0.8"/></svg>
</div>
</body></html>
